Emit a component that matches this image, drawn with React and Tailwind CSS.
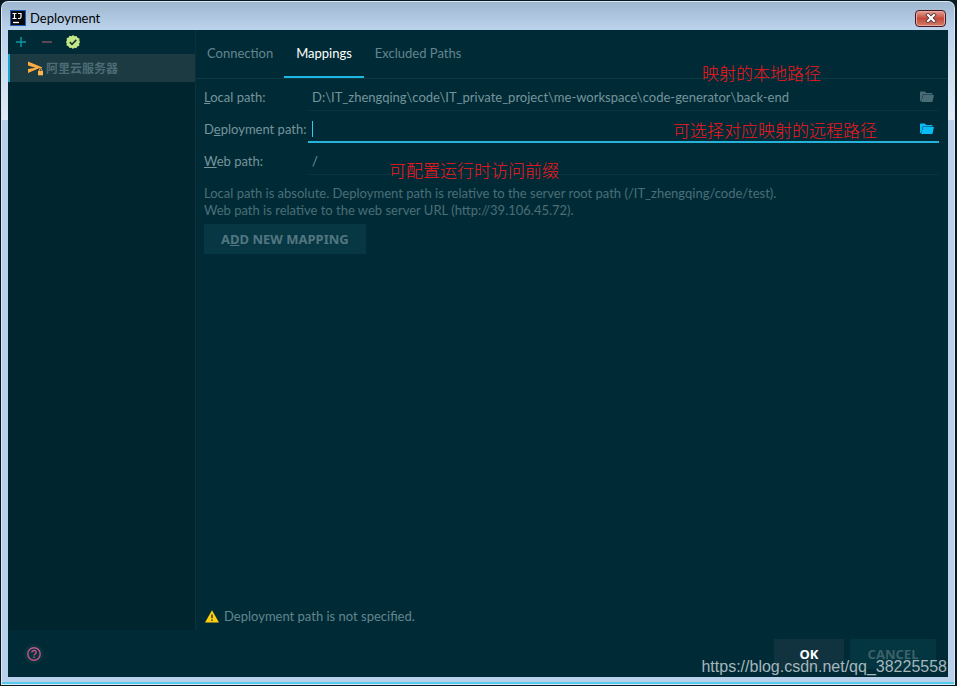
import React from "react";

function IdeaLogo() {
  return (
    <svg width="16" height="16" viewBox="0 0 16 16" aria-hidden="true">
      <rect width="16" height="16" fill="#1d5fb8" />
      <rect x="1" y="1" width="14" height="14" fill="#07090c" />
      <path d="M2.500 3.500h4M4.500 3.500v5M2.500 8.500h4M8 3.500h3v3.600q0 1.400-1.500 1.400h-1.500" fill="none" stroke="#fff" strokeWidth="1.200" />
      <path d="M3 12.500h6" stroke="#fff" strokeWidth="1.300" />
    </svg>
  );
}

function CloseGlyph() {
  return (
    <svg width="12" height="10" viewBox="0 0 12 10" aria-hidden="true">
      <path d="M3 2L9 8M9 2L3 8" stroke="#4c3036" strokeWidth="3.800" strokeLinecap="square" />
      <path d="M3 2L9 8M9 2L3 8" stroke="#fff" strokeWidth="2.200" strokeLinecap="square" />
    </svg>
  );
}

function CheckBadge() {
  return (
    <svg width="14" height="14" viewBox="0 0 14 14" aria-hidden="true">
      <path
        d="M7 0l1.600 1.300 2-.4.9 1.800 2 .7-.2 2L14 7l-.9 1.700.2 2-2 .7-1 1.800-2-.5L7 14l-1.500-1.300-2 .4-1-1.800-2-.7.3-2L0 7l.9-1.700-.3-2 2-.7 1-1.800 2 .5z"
        fill="#c3e887"
      />
      <path d="M3.800 7.100l2.200 2.200 4.300-4.400" fill="none" stroke="#17352f" strokeWidth="1.600" />
    </svg>
  );
}

function ServerIcon() {
  return (
    <svg width="16" height="16" viewBox="0 0 16 16" aria-hidden="true">
      <path d="M0 1.500l14 5.700v1h-3L0 13V9l7.500-1.300L0 5.500z" fill="#ffab40" />
      <path d="M9.200 9.200h6.800v6.800H9.200z" fill="#1c3a41" />
      <path d="M10 11h5v4.300h-5z" fill="#ffb84f" />
      <path d="M11.200 11.200V10.200q0-1.200 1.300-1.200t1.300 1.200v1" fill="none" stroke="#ffb84f" />
    </svg>
  );
}

function FolderIcon() {
  return (
    <svg width="14" height="12" viewBox="0 0 14 12" fill="currentColor" aria-hidden="true">
      <path d="M0 1.200Q0 .5.7.5h4.200l1.300 1.400h5.500q.8 0 .8.800v.8H2.800L1.400 9.500 0 10.300z" />
      <path d="M3.200 4.100H14l-1.500 6.300q-.2.600-.8.600H1.100z" />
    </svg>
  );
}

function WarningIcon() {
  return (
    <svg width="14" height="13" viewBox="0 0 14 13" aria-hidden="true">
      <path d="M7 .2L14 12.600H0z" fill="#fcd00f" />
      <path d="M7 4.500v3.700M7 9.500v1.500" stroke="#2b3420" strokeWidth="1.400" />
    </svg>
  );
}

function HelpIcon() {
  return (
    <svg width="14" height="14" viewBox="0 0 14 14" fill="none" stroke="#c2558b" aria-hidden="true">
      <circle cx="7" cy="7" r="6.200" strokeWidth="1.400" />
      <path d="M4.900 5.500q0-2 2.100-2t2.100 1.900q0 .9-1.100 1.600-1 .6-1 1.500" strokeWidth="1.300" />
      <path d="M7 9.600v1.300" strokeWidth="1.400" />
    </svg>
  );
}

function TitleBar() {
  return (
    <header className="flex h-7 shrink-0 items-center gap-1 pt-1 pl-0.5 text-black">
      <IdeaLogo />
      <h1 className="flex-1 leading-4">Deployment</h1>
      <button
        type="button"
        aria-label="Close"
        className="mr-0.5 flex h-[17px] w-[31px] items-center justify-center rounded-sm border border-[#431824] bg-linear-to-b from-[#e4a094] from-0% via-[#c4493a] via-50% to-[#d07c68] shadow-[inset_0_0_0_1px_#e6aaa0]"
      >
        <CloseGlyph />
      </button>
    </header>
  );
}

function Sidebar() {
  return (
    <aside className="w-[187px] shrink-0 bg-[#00252e]">
      <div className="flex h-6 items-center gap-4 bg-[#002b36] pl-2">
        <button type="button" aria-label="Add" className="text-[#0f9ba0]">
          <svg width="10" height="10" viewBox="0 0 10 10" aria-hidden="true">
            <path d="M5 0v10M0 5h10" stroke="currentColor" strokeWidth="1.400" />
          </svg>
        </button>
        <button type="button" aria-label="Remove" className="text-[#875261]">
          <svg width="10" height="10" viewBox="0 0 10 10" aria-hidden="true">
            <path d="M0 5h10" stroke="currentColor" strokeWidth="1.400" />
          </svg>
        </button>
        <button type="button" aria-label="Use as default" className="-ml-0.5">
          <CheckBadge />
        </button>
      </div>
      <ul>
        <li className="flex h-7 items-center gap-0.5 border-l-2 border-[#16a8cd] bg-[#1c3a41] pl-[18px]">
          <ServerIcon />
          <span className="font-['Noto_Sans_CJK_SC',sans-serif] text-[12px] font-bold leading-4 text-[#4d6c76]">阿里云服务器</span>
        </li>
      </ul>
    </aside>
  );
}

function Tabs() {
  return (
    <nav className="flex h-[49px] border-b border-[#0c3a43] text-[#63858e]" role="tablist">
      <button type="button" role="tab" aria-selected="false" className="px-[11px]">
        Connection
      </button>
      <button type="button" role="tab" aria-selected="true" className="border-y-2 border-t-transparent border-b-[#1ab8e3] px-3 text-white">
        Mappings
      </button>
      <button type="button" role="tab" aria-selected="false" className="px-[11px]">
        Excluded Paths
      </button>
    </nav>
  );
}

function Annotation({ className, children }) {
  return (
    <span
      className={
        "pointer-events-none absolute whitespace-nowrap font-['Noto_Sans_CJK_SC',sans-serif] text-[17px] font-light leading-6 text-[#f5161c] " +
        className
      }
    >
      {children}
    </span>
  );
}

function PathRow({ id, label, value, focused, browse, note }) {
  return (
    <div className="relative flex h-8 items-start">
      <label htmlFor={id} className="w-[104px] shrink-0 whitespace-nowrap leading-[30px]">
        {label}
      </label>
      <div
        className={
          focused
            ? "flex h-[29px] min-w-0 flex-1 items-center border-b-2 border-[#25b3dc] pt-0.5 pr-[5px] pl-1"
            : "flex h-[29px] min-w-0 flex-1 items-center border-b border-[#083640] pt-0.5 pr-[5px] pl-1"
        }
      >
        {focused && <span className="h-4 w-px shrink-0 bg-[#39c6ea]" />}
        <input id={id} type="text" defaultValue={value} className="h-6 min-w-0 flex-1 bg-transparent outline-none" />
        {browse && (
          <button type="button" aria-label="Browse" className={focused ? "text-[#08bdf5]" : "text-[#496c76]"}>
            <FolderIcon />
          </button>
        )}
      </div>
      {note}
    </div>
  );
}

function MappingsPanel() {
  return (
    <section className="flex flex-1 flex-col pt-[3px] pr-[9px] pl-2 text-[#76949b]">
      <PathRow
        id="local"
        label={<><u>L</u>ocal path:</>}
        value="D:\IT_zhengqing\code\IT_private_project\me-workspace\code-generator\back-end"
        browse
        note={<Annotation className="-top-[21px] right-[118px]">映射的本地路径</Annotation>}
      />
      <PathRow
        id="deployment"
        label={<>D<u>e</u>ployment path:</>}
        value=""
        focused
        browse
        note={<Annotation className="top-1 right-[62px]">可选择对应映射的远程路径</Annotation>}
      />
      <PathRow
        id="web"
        label={<><u>W</u>eb path:</>}
        value="/"
        note={<Annotation className="top-3 left-[185px]">可配置运行时访问前缀</Annotation>}
      />
      <p className="pt-[7px] leading-[17px] text-[#4b6e78]">
        Local path is absolute. Deployment path is relative to the server root path (/IT_zhengqing/code/test).
        <br />
        Web path is relative to the web server URL (http://39.106.45.72).
      </p>
      <button type="button" className="mt-[5px] h-[30px] self-start bg-[#073742] px-[17px] pt-0.5 font-['Noto_Sans',sans-serif] font-bold text-[#527681]">
        A<u>D</u>D NEW MAPPING
      </button>
      <p className="mt-auto flex items-center gap-[5px] pb-1 pl-px leading-5 text-[#63858e]">
        <WarningIcon />
        Deployment path is not specified.
      </p>
    </section>
  );
}

function Footer() {
  return (
    <footer className="flex h-[47px] shrink-0 items-center pr-3 pl-4 font-['Noto_Sans',sans-serif]">
      <button type="button" aria-label="Help" className="flex size-5 items-center justify-center rounded-full bg-[#0a323b]">
        <HelpIcon />
      </button>
      <button type="button" className="ml-auto h-[30px] w-[70px] bg-[#10333f] pt-0.5 font-bold text-white">
        OK
      </button>
      <button type="button" className="ml-1.5 h-[30px] w-[86px] bg-[#033640] pt-0.5 font-bold text-[#3d6069]">
        CANCEL
      </button>
    </footer>
  );
}

export default function App() {
  return (
    <div className="h-screen bg-[#071922] pt-0.5 pr-[3px] pb-0.5 pl-0.5 font-[Lato,'Noto_Sans_CJK_SC',sans-serif] text-[13px]">
      <div className="relative flex h-full flex-col rounded-t-md border-b-2 border-[#55c8ee] bg-[#b9d1ea] bg-[linear-gradient(#9eb8d0,#bcd3ec_28px,#dfeaf5_118px,#b9d1ea_118px)] px-1.5 pb-[5px] shadow-[0_0_0_1px_#dce8f2]">
        <TitleBar />
        <main className="flex min-h-0 flex-1 flex-col bg-[#002b36]">
          <div className="flex min-h-0 flex-1">
            <Sidebar />
            <div className="flex min-w-0 flex-1 flex-col border-l border-[#09323c]">
              <Tabs />
              <MappingsPanel />
            </div>
          </div>
          <Footer />
        </main>
        <span className="pointer-events-none absolute right-[7px] bottom-[5px] font-['Liberation_Sans',sans-serif] text-[16px] leading-5 text-[#a6b7bd]">
          https://blog.csdn.net/qq_38225558
        </span>
      </div>
    </div>
  );
}
